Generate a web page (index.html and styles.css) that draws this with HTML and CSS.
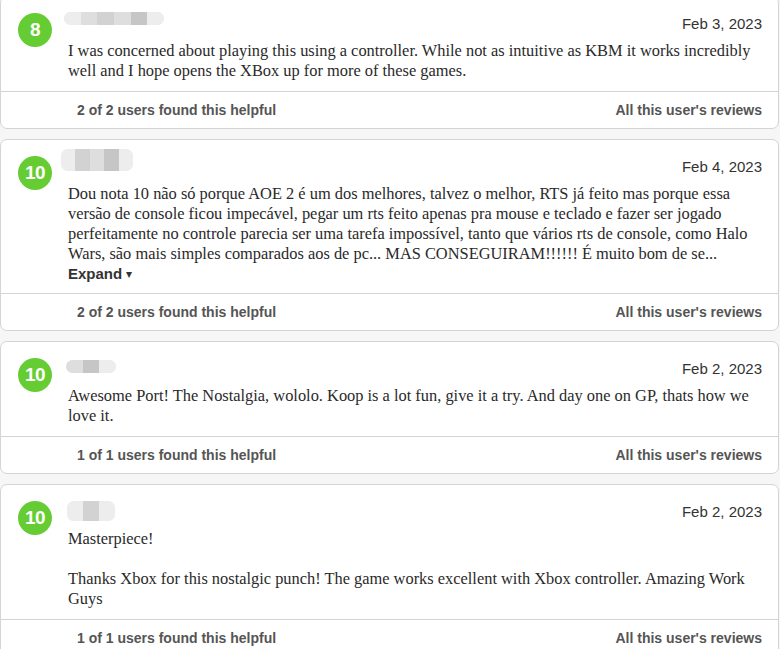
FILE: index.html
```html
<!DOCTYPE html>
<html lang="en">
<head>
<meta charset="utf-8">
<title>User reviews</title>
<link rel="stylesheet" href="styles.css">
</head>
<body>
<div class="reviews">
  <article class="review">
    <div class="main">
      <div class="score">8</div>
      <div class="content">
        <div class="top">
          <div class="author blob-a"><span class="px p1"></span><span class="px p2"></span><span class="px p3"></span><span class="px p2"></span><span class="px p4"></span><span class="px p1"></span></div>
          <div class="date">Feb 3, 2023</div>
        </div>
        <div class="body">I was concerned about playing this using a controller. While not as intuitive as KBM it works incredibly well and I hope opens the XBox up for more of these games.</div>
      </div>
    </div>
    <div class="foot"><span>2 of 2 users found this helpful</span><span>All this user's reviews</span></div>
  </article>

  <article class="review">
    <div class="main">
      <div class="score">10</div>
      <div class="content">
        <div class="top">
          <div class="author blob-b"><span class="px p1"></span><span class="px p3"></span><span class="px p2"></span><span class="px p4"></span><span class="px p1"></span></div>
          <div class="date">Feb 4, 2023</div>
        </div>
        <div class="body">Dou nota 10 não só porque AOE 2 é um dos melhores, talvez o melhor, RTS já feito mas porque essa versão de console ficou impecável, pegar um rts feito apenas pra mouse e teclado e fazer ser jogado perfeitamente no controle parecia ser uma tarefa impossível, tanto que vários rts de console, como Halo Wars, são mais simples comparados aos de pc... MAS CONSEGUIRAM!!!!!! É muito bom de se...</div>
        <div class="expand">Expand <span class="caret">&#9662;</span></div>
      </div>
    </div>
    <div class="foot"><span>2 of 2 users found this helpful</span><span>All this user's reviews</span></div>
  </article>

  <article class="review">
    <div class="main">
      <div class="score">10</div>
      <div class="content">
        <div class="top">
          <div class="author blob-c"><span class="px p2"></span><span class="px p4"></span><span class="px p1"></span></div>
          <div class="date">Feb 2, 2023</div>
        </div>
        <div class="body">Awesome Port! The Nostalgia, wololo. Koop is a lot fun, give it a try. And day one on GP, thats how we love it.</div>
      </div>
    </div>
    <div class="foot"><span>1 of 1 users found this helpful</span><span>All this user's reviews</span></div>
  </article>

  <article class="review">
    <div class="main">
      <div class="score">10</div>
      <div class="content">
        <div class="top">
          <div class="author blob-d"><span class="px p1"></span><span class="px p3"></span><span class="px p1"></span></div>
          <div class="date">Feb 2, 2023</div>
        </div>
        <div class="body">Masterpiece!<br><br>Thanks Xbox for this nostalgic punch! The game works excellent with Xbox controller. Amazing Work Guys</div>
      </div>
    </div>
    <div class="foot"><span>1 of 1 users found this helpful</span><span>All this user's reviews</span></div>
  </article>
</div>
</body>
</html>
```

FILE: styles.css
```css
* { box-sizing: border-box; }

html, body {
  margin: 0;
  padding: 0;
  background: #f6f6f6;
}

body {
  width: 780px;
  height: 649px;
  overflow: hidden;
  font-family: "Liberation Sans", Arial, sans-serif;
}

.reviews {
  display: flex;
  flex-direction: column;
  gap: 10px;
  margin-top: -4px;
  width: 779px;
}

.review {
  background: #fff;
  border: 1px solid #d4d4d4;
  border-radius: 7px;
}

.main {
  display: flex;
  gap: 16px;
  padding: 16px 16px 10px 17px;
}

.score {
  flex: none;
  width: 34px;
  height: 34px;
  border-radius: 50%;
  background: #66cc33;
  color: #fff;
  font-weight: bold;
  font-size: 19px;
  display: flex;
  align-items: center;
  justify-content: center;
  letter-spacing: -0.5px;
}

.content {
  flex: 1;
  min-width: 0;
}

.top {
  display: flex;
  justify-content: space-between;
  align-items: flex-start;
  height: 28px;
}

.date {
  font-size: 15px;
  line-height: 22px;
  color: #333;
}

.author {
  display: flex;
  height: 13px;
  border-radius: 7px;
  overflow: hidden;
  filter: blur(0.6px);
  background: #ececec;
}

.px { display: block; height: 100%; flex: 1; }
.p1 { background: #ededed; }
.p2 { background: #dedede; }
.p3 { background: #d2d2d2; }
.p4 { background: #c6c6c6; }

.blob-a { width: 100px; margin-left: -4px; margin-top: -1px; }
.blob-b { width: 72px; height: 22px; margin-left: -7px; margin-top: -7px; }
.blob-c { width: 50px; margin-left: -2px; margin-top: 2px; }
.blob-d { width: 48px; height: 20px; margin-left: -1px; margin-top: 0; }

.body {
  font-family: "Liberation Serif", "Times New Roman", serif;
  font-size: 16.4px;
  line-height: 20px;
  color: #2a2a2a;
}

.expand {
  font-weight: bold;
  font-size: 15px;
  line-height: 20px;
  height: 19px;
  color: #333;
}

.caret {
  display: inline-block;
  font-size: 12px;
  line-height: 10px;
  font-weight: normal;
  vertical-align: 1px;
}

.foot {
  display: flex;
  justify-content: space-between;
  align-items: center;
  height: 37px;
  border-top: 1px solid #d4d4d4;
  padding: 0 16px 0 76px;
  font-size: 14px;
  font-weight: bold;
  color: #555;
}
```
